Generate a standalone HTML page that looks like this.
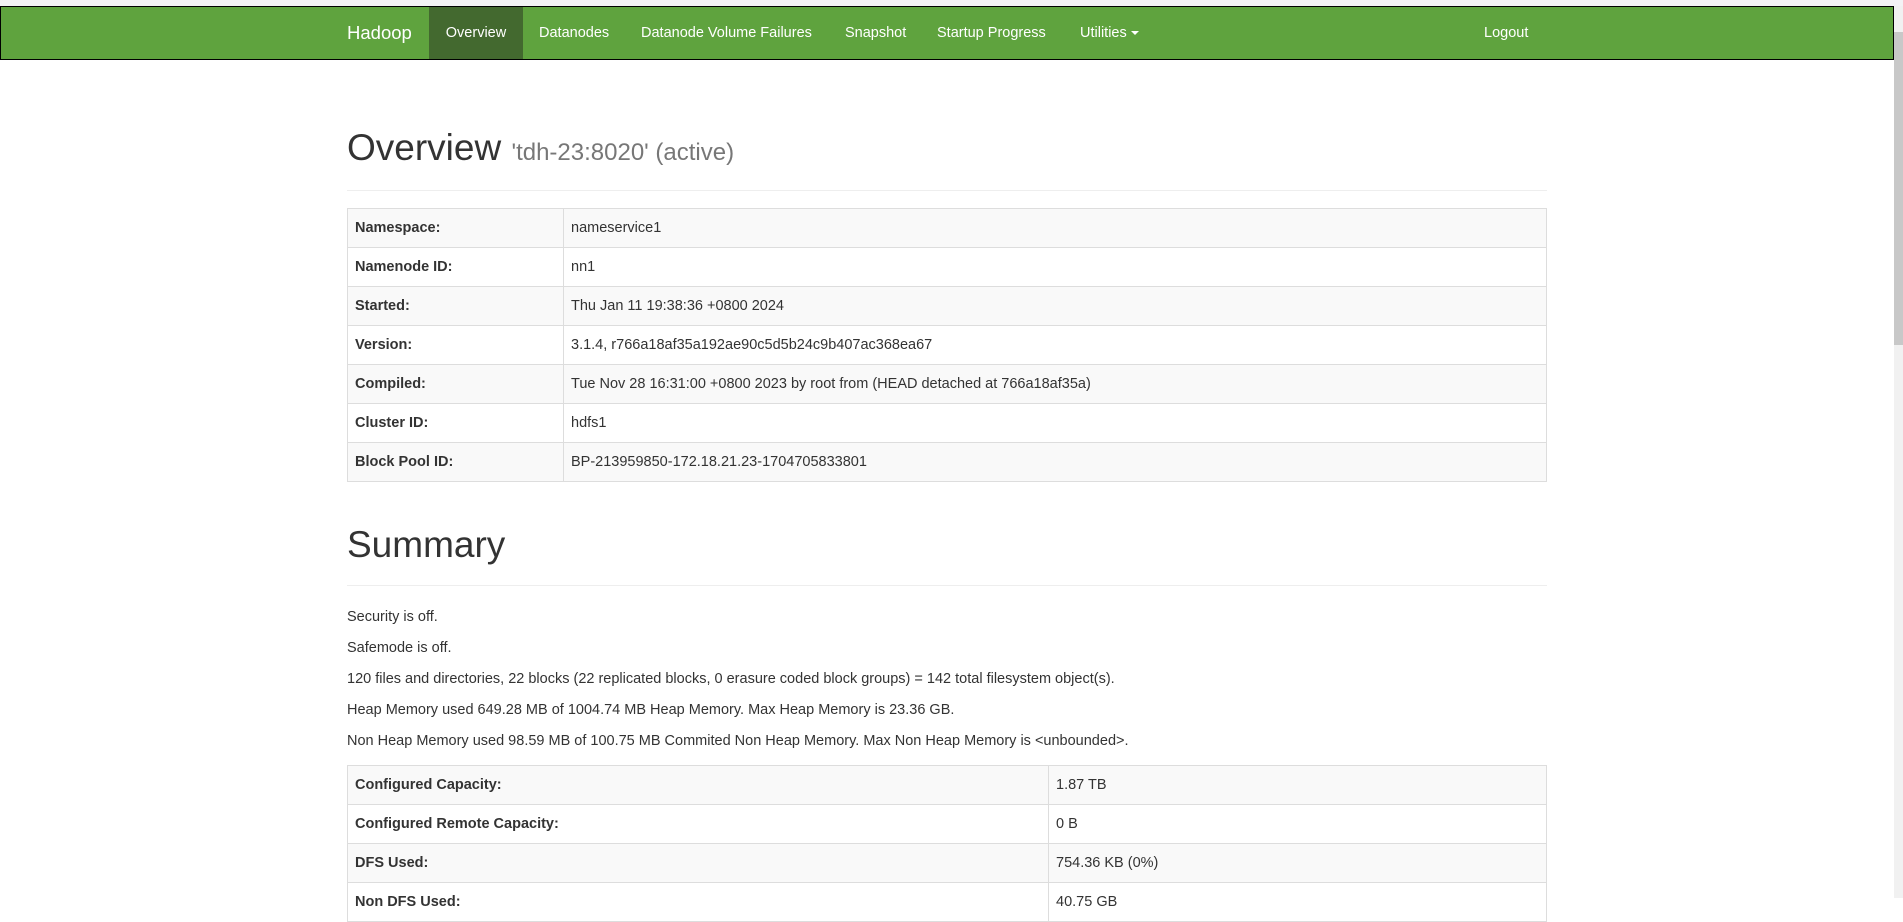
<!DOCTYPE html>
<html><head><meta charset="utf-8">
<style>
*{box-sizing:border-box}
html,body{margin:0;padding:0}
body{width:1903px;height:898px;overflow:hidden;background:#fff;font-family:"Liberation Sans",Arial,sans-serif;font-size:14.5px;line-height:21px;color:#333;position:relative}
.topstrip{position:absolute;left:0;top:0;width:1903px;height:6px;background:#f3f3f5}
.nav{position:absolute;left:0;top:6px;width:1894px;height:54px;background:#5fa33e;border:1px solid #000}
.nav a{position:absolute;top:0;height:52px;line-height:52px;color:#fff;text-decoration:none;white-space:nowrap}
.nav .brand{left:346px;font-size:18.5px;padding:0}
.nav .act{background:#43692f;left:428px;width:94px;text-align:center}
.caret{display:inline-block;width:0;height:0;border-top:4px solid #fff;border-left:4px solid transparent;border-right:4px solid transparent;vertical-align:middle;margin-left:4px}
.sb{position:absolute;left:1894px;top:6px;width:9px;height:892px;background:#f1f1f1}
.sb i{position:absolute;left:0;top:26px;width:9px;height:313px;background:#c8c8c8}
.c{position:absolute;left:347px;width:1200px}
h1{margin:0;font-weight:400;font-size:37px;line-height:41px;border-bottom:1px solid #eee}
h1 small{font-size:24px;color:#777}
table{border-collapse:collapse;width:1200px}
td{border:1px solid #ddd;padding:0 7px;height:39px;vertical-align:middle}
tr:nth-child(odd) td{background:#f9f9f9}
th{}
td.l{font-weight:bold}
p{margin:0 0 10px 0;line-height:21px}
</style></head><body>
<div class="topstrip"></div>
<div class="nav">
<a class="brand">Hadoop</a>
<a class="act">Overview</a>
<a style="left:538px">Datanodes</a>
<a style="left:640px">Datanode Volume Failures</a>
<a style="left:844px">Snapshot</a>
<a style="left:936px">Startup Progress</a>
<a style="left:1079px">Utilities<span class="caret"></span></a>
<a style="left:1483px">Logout</a>
</div>
<div class="sb"><i></i></div>

<div class="c" style="top:127px">
<h1 style="padding-bottom:17px">Overview <small>'tdh-23:8020' (active)</small></h1>
</div>
<div class="c" style="top:208px">
<table>
<tr><td class="l" style="width:216px">Namespace:</td><td>nameservice1</td></tr>
<tr><td class="l">Namenode ID:</td><td>nn1</td></tr>
<tr><td class="l">Started:</td><td>Thu Jan 11 19:38:36 +0800 2024</td></tr>
<tr><td class="l">Version:</td><td>3.1.4, r766a18af35a192ae90c5d5b24c9b407ac368ea67</td></tr>
<tr><td class="l">Compiled:</td><td>Tue Nov 28 16:31:00 +0800 2023 by root from (HEAD detached at 766a18af35a)</td></tr>
<tr><td class="l">Cluster ID:</td><td>hdfs1</td></tr>
<tr><td class="l">Block Pool ID:</td><td>BP-213959850-172.18.21.23-1704705833801</td></tr>
</table>
</div>
<div class="c" style="top:524px">
<h1 style="padding-bottom:20px">Summary</h1>
</div>
<div class="c" style="top:607px">
<p>Security is off.</p>
<p>Safemode is off.</p>
<p>120 files and directories, 22 blocks (22 replicated blocks, 0 erasure coded block groups) = 142 total filesystem object(s).</p>
<p>Heap Memory used 649.28 MB of 1004.74 MB Heap Memory. Max Heap Memory is 23.36 GB.</p>
<p>Non Heap Memory used 98.59 MB of 100.75 MB Commited Non Heap Memory. Max Non Heap Memory is &lt;unbounded&gt;.</p>
</div>
<div class="c" style="top:765px">
<table>
<tr><td class="l" style="width:701px">Configured Capacity:</td><td>1.87 TB</td></tr>
<tr><td class="l">Configured Remote Capacity:</td><td>0 B</td></tr>
<tr><td class="l">DFS Used:</td><td>754.36 KB (0%)</td></tr>
<tr><td class="l">Non DFS Used:</td><td>40.75 GB</td></tr>
</table>
</div>
</body></html>
